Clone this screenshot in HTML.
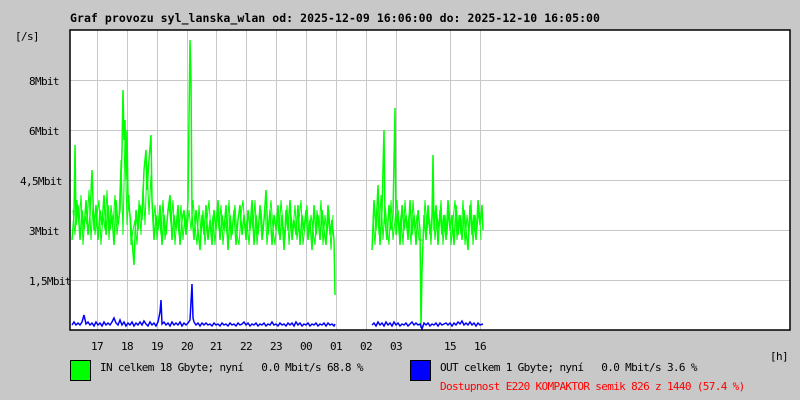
<!DOCTYPE html>
<html><head><meta charset="utf-8"><style>
body{margin:0;width:800px;height:400px;background:#c8c8c8;overflow:hidden;font-family:"DejaVu Sans Mono","Liberation Mono",monospace;font-size:11px;}
.t{position:absolute;white-space:pre;color:#000;letter-spacing:-0.65px;}
</style></head><body>
<svg width="800" height="400" style="position:absolute;left:0;top:0">
<rect x="70" y="30" width="720" height="300" fill="#fff"/>
<g stroke="#c8c8c8" stroke-width="1">
<line x1="70" y1="80.5" x2="790" y2="80.5"/><line x1="70" y1="130.5" x2="790" y2="130.5"/>
<line x1="70" y1="180.5" x2="790" y2="180.5"/><line x1="70" y1="230.5" x2="790" y2="230.5"/>
<line x1="70" y1="280.5" x2="790" y2="280.5"/>
<line x1="97.5" y1="30" x2="97.5" y2="330"/><line x1="127.5" y1="30" x2="127.5" y2="330"/>
<line x1="157.5" y1="30" x2="157.5" y2="330"/><line x1="187.5" y1="30" x2="187.5" y2="330"/>
<line x1="216.5" y1="30" x2="216.5" y2="330"/><line x1="246.5" y1="30" x2="246.5" y2="330"/>
<line x1="276.5" y1="30" x2="276.5" y2="330"/><line x1="306.5" y1="30" x2="306.5" y2="330"/>
<line x1="336.5" y1="30" x2="336.5" y2="330"/><line x1="366.5" y1="30" x2="366.5" y2="330"/>
<line x1="396.5" y1="30" x2="396.5" y2="330"/><line x1="450.5" y1="30" x2="450.5" y2="330"/>
<line x1="480.5" y1="30" x2="480.5" y2="330"/>
</g>
<g fill="none" stroke="#00ff00" stroke-width="1.5">
<polyline points="72,240 74,215 75,145 76,225 78,205 80,240 82,210 84,230 86,200 88,235 90,215 92,170 94,230 96,205 98,240 100,210 102,225 104,195 106,235 108,205 110,230 112,215 114,245 116,200 118,225 120,210 122,150 123,90 124,140 125,120 126,180 127,130 128,200 130,215 132,240 134,265 136,210 138,230 140,205 142,220 144,170 146,150 147,190 149,160 151,135 152,200 154,240 156,215 158,230 160,205 162,245 164,215 166,235 168,210 170,195 172,240 174,215 176,230 178,205 180,245 182,220 184,210 186,235 188,200 190,40 191,80 192,215 194,240 196,210 198,230 200,250 202,215 204,235 206,205 208,240 210,220 212,245 214,210 216,230 218,200 220,240 222,215 224,230 226,205 228,250 230,215 232,235 234,210 236,245 238,220 240,205 242,235 244,215 246,240 248,210 250,230 252,200 254,245 256,215 258,235 260,205 262,240 264,220 266,190 268,235 270,210 272,245 274,215 276,230 278,205 280,240 282,215 284,250 286,210 288,230 290,200 292,240 294,220 296,235 298,205 300,245 302,215 304,230 306,210 308,240 310,220 312,250 314,205 316,235 318,215 320,240 322,210 324,230 326,245 328,205 330,235 332,220 334,240 335,295"/>
<polyline stroke-width="1" points="73,210 75,235 77,200 79,225 81,195 83,245 85,215 87,225 89,190 91,240 93,205 95,235 97,215 99,200 101,245 103,215 105,230 107,190 109,240 111,205 113,225 115,195 117,235 119,215 121,160 123,235 125,135 127,225 129,195 131,245 133,230 135,220 137,245 139,200 141,235 143,185 145,225 147,165 149,215 151,175 153,225 155,205 157,240 159,215 161,235 163,200 165,240 167,220 169,205 171,225 173,200 175,245 177,215 179,235 181,205 183,240 185,215 187,230 189,210 191,230 193,200 195,225 197,245 199,205 201,235 203,210 205,245 207,220 209,200 211,235 213,215 215,245 217,210 219,230 221,205 223,245 225,220 227,235 229,200 231,240 233,220 235,205 237,235 239,245 241,215 243,200 245,230 247,220 249,245 251,215 253,230 255,200 257,245 259,220 261,210 263,235 265,205 267,245 269,220 271,200 273,230 275,245 277,215 279,235 281,200 283,225 285,240 287,205 289,245 291,215 293,230 295,205 297,240 299,220 301,200 303,245 305,225 307,205 309,235 311,215 313,230 315,245 317,210 319,230 321,200 323,245 325,215 327,235 329,210 331,250 333,215"/>
<polyline points="372,250 374,200 376,230 378,185 380,245 382,210 384,130 385,220 387,240 389,205 391,230 393,215 395,108 396,235 398,210 400,245 402,205 404,230 406,215 408,240 410,200 412,235 414,215 416,245 418,210 420,230 421,328 422,270 424,215 426,240 428,205 430,235 432,215 433,155 434,230 436,205 438,245 440,210 442,235 444,215 446,240 448,200 450,230 452,215 454,245 456,205 458,235 460,215 462,240 464,210 466,230 468,250 470,205 472,235 474,215 476,240 478,200 480,225 482,205 483,230"/>
<polyline stroke-width="1" points="373,215 375,245 377,205 379,235 381,195 383,240 385,205 387,225 389,245 391,200 393,240 395,220 397,200 399,235 401,215 403,245 405,200 407,230 409,215 411,245 413,200 415,230 417,215 419,240 423,240 425,200 427,230 429,215 431,245 433,205 435,240 437,215 439,230 441,200 443,245 445,215 447,235 449,205 451,245 453,220 455,200 457,240 459,215 461,235 463,200 465,245 467,215 469,235 471,200 473,245 475,215 477,230 479,205 481,240"/>
</g>
<g fill="none" stroke="#0000ff" stroke-width="1.5">
<polyline points="72,325 74,322 76,325 78,323 80,325 82,322 84,315 86,324 88,322 90,325 92,323 94,326 96,322 98,325 100,323 102,326 104,322 106,325 108,323 110,325 112,322 114,318 116,323 118,325 120,320 122,325 124,322 126,326 128,323 130,325 132,322 134,326 136,323 138,325 140,322 142,325 144,321 146,324 148,326 150,322 152,325 154,323 156,326 158,322 160,312 161,300 162,324 164,322 166,325 168,323 170,326 172,322 174,325 176,323 178,325 180,322 182,326 184,323 186,325 188,323 190,320 192,284 193,318 194,322 196,325 198,323 200,326 202,323 204,325 206,323 208,325 210,324 212,326 214,323 216,325 218,324 220,326 222,323 224,325 226,324 228,326 230,323 232,325 234,324 236,326 238,323 240,325 242,324 244,322 246,325 248,323 250,326 252,324 254,325 256,323 258,326 260,324 262,325 264,323 266,326 268,324 270,325 272,322 274,325 276,324 278,326 280,323 282,325 284,324 286,326 288,323 290,325 292,323 294,326 296,322 298,325 300,323 302,326 304,324 306,325 308,323 310,326 312,324 314,325 316,323 318,326 320,324 322,325 324,323 326,326 328,323 330,325 332,324 334,326 335,324"/>
<polyline points="372,325 374,323 376,326 378,322 380,325 382,323 384,326 386,322 388,325 390,323 392,326 394,322 396,325 398,323 400,326 402,324 404,325 406,323 408,326 410,324 412,322 414,325 416,323 418,325 420,324 422,329 424,323 426,325 428,323 430,326 432,324 434,325 436,323 438,326 440,323 442,325 444,324 446,323 448,325 450,323 452,326 454,323 456,325 458,322 460,324 462,321 464,325 466,323 468,325 470,322 472,325 474,323 476,326 478,323 480,325 483,324"/>
</g>
<rect x="70" y="30" width="720" height="300" fill="none" stroke="#000" stroke-width="1.5"/>
<rect x="70.5" y="360.5" width="20" height="20" fill="#00ff00" stroke="#000"/>
<rect x="410.5" y="360.5" width="20" height="20" fill="#0000ff" stroke="#000"/>
</svg>
<div class="t" style="left:70px;top:11px;font-weight:bold;font-size:11.5px;letter-spacing:0.05px">Graf provozu syl_lanska_wlan od: 2025-12-09 16:06:00 do: 2025-12-10 16:05:00</div>
<div class="t" style="left:15px;top:30px">[/s]</div>
<div class="t" style="left:29px;top:75px">8Mbit</div>
<div class="t" style="left:29px;top:125px">6Mbit</div>
<div class="t" style="left:20px;top:175px">4,5Mbit</div>
<div class="t" style="left:29px;top:225px">3Mbit</div>
<div class="t" style="left:29px;top:275px">1,5Mbit</div>
<div class="t" style="left:91px;top:340px">17</div>
<div class="t" style="left:121px;top:340px">18</div>
<div class="t" style="left:151px;top:340px">19</div>
<div class="t" style="left:181px;top:340px">20</div>
<div class="t" style="left:210px;top:340px">21</div>
<div class="t" style="left:240px;top:340px">22</div>
<div class="t" style="left:270px;top:340px">23</div>
<div class="t" style="left:300px;top:340px">00</div>
<div class="t" style="left:330px;top:340px">01</div>
<div class="t" style="left:360px;top:340px">02</div>
<div class="t" style="left:390px;top:340px">03</div>
<div class="t" style="left:444px;top:340px">15</div>
<div class="t" style="left:474px;top:340px">16</div>
<div class="t" style="left:770px;top:350px">[h]</div>
<div class="t" style="left:100px;top:361px">IN celkem 18 Gbyte; nyní   0.0 Mbit/s 68.8 %</div>
<div class="t" style="left:440px;top:361px">OUT celkem 1 Gbyte; nyní   0.0 Mbit/s 3.6 %</div>
<div class="t" style="left:440px;top:380px;color:#ff0000">Dostupnost E220 KOMPAKTOR semik 826 z 1440 (57.4 %)</div>
</body></html>
